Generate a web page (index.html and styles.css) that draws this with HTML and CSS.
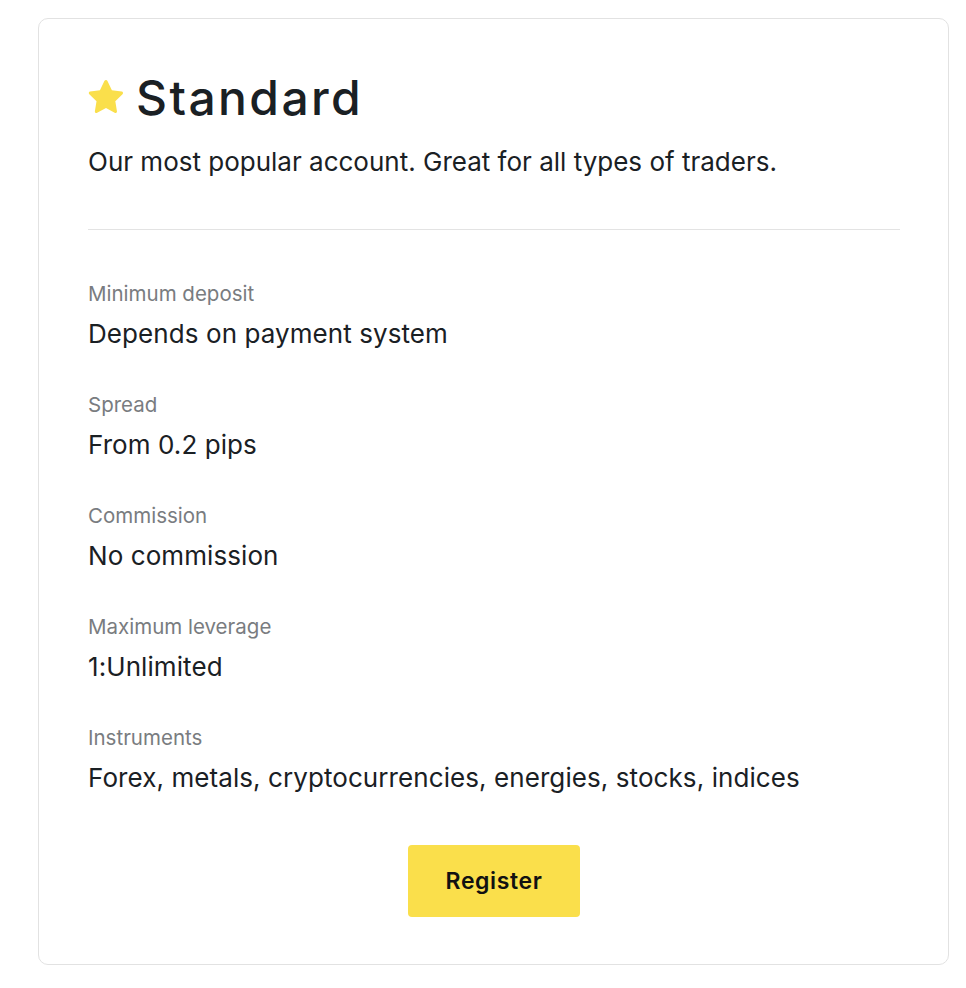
FILE: index.html
```html
<!DOCTYPE html>
<html>
<head>
<meta charset="utf-8">
<link rel="stylesheet" href="styles.css">
</head>
<body>
<div class="card">
  <div class="head">
    <h1 class="title">
      <svg class="star" viewBox="1.4 1.6 21.2 20.8" width="36" height="34"><path d="M12 1.6c.4 0 .7.2.9.6l2.7 5.6 6 .9c.8.1 1.1 1.1.5 1.6l-4.4 4.3 1 6.1c.1.8-.7 1.4-1.4 1l-5.3-2.9-5.4 2.9c-.7.4-1.6-.2-1.4-1l1-6.1L1.8 10.3c-.6-.5-.3-1.5.5-1.6l6-.9 2.7-5.6c.2-.4.6-.6 1-.6z" fill="#fadf4b"/></svg>
      <span>Standard</span>
    </h1>
    <p class="desc">Our most popular account. Great for all types of traders.</p>
  </div>
  <div class="rows">
    <div class="row"><div class="label">Minimum deposit</div><div class="value">Depends on payment system</div></div>
    <div class="row"><div class="label">Spread</div><div class="value">From 0.2 pips</div></div>
    <div class="row"><div class="label">Commission</div><div class="value">No commission</div></div>
    <div class="row"><div class="label">Maximum leverage</div><div class="value">1:Unlimited</div></div>
    <div class="row"><div class="label">Instruments</div><div class="value">Forex, metals, cryptocurrencies, energies, stocks, indices</div></div>
  </div>
  <div class="actions"><button class="btn">Register</button></div>
</div>
</body>
</html>
```
FILE: styles.css
```css
html, body { margin: 0; padding: 0; background: #fff; }
body { font-family: Inter, "Noto Sans", sans-serif; color: #1a2024; }
.card {
  margin: 18px 0 0 38px;
  width: 911px;
  height: 947px;
  box-sizing: border-box;
  border: 1px solid #e2e2e2;
  border-radius: 10px;
  padding: 0 48px 0 49px;
}
.head { border-bottom: 1px solid #e3e3e3; padding-top: 51px; padding-bottom: 49px; }
.title {
  margin: 0;
  display: flex;
  align-items: center;
  gap: 12px;
  font-size: 48px;
  font-weight: 500;
  line-height: 56px;
  letter-spacing: 2.4px;
}
.star { flex: none; margin-top: -2px; }
.desc { margin: 18px 0 0; font-size: 26px; line-height: 36px; }
.rows { padding-top: 50px; display: flex; flex-direction: column; gap: 39px; }
.label { font-size: 20.5px; line-height: 28px; color: #797c80; }
.value { margin-top: 8px; font-size: 26px; line-height: 36px; letter-spacing: 0.08px; }
.actions { display: flex; justify-content: center; margin-top: 49px; }
.btn {
  width: 172px; height: 72px;
  background: #fadf4b;
  border: none; border-radius: 4px;
  font-family: Inter, sans-serif;
  font-size: 23px; font-weight: 600; color: #111;
  letter-spacing: 0.6px;
}
```
